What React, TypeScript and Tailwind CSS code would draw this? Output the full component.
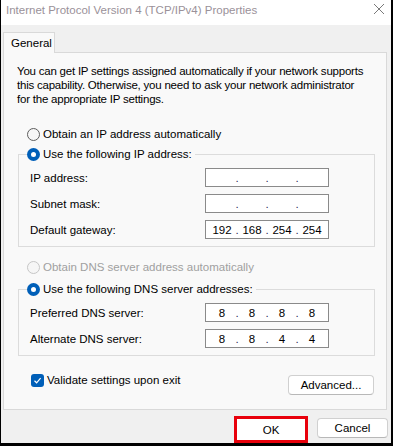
import { Fragment } from 'react'
import cx from 'clsx'

const font = { fontFamily: '"Liberation Sans", Arial, sans-serif' }

const Radio = ({ checked, disabled }: { checked?: boolean; disabled?: boolean }) => {
  if (checked) {
    return (
      <span className="flex size-[13px] flex-none items-center justify-center rounded-full bg-[#005fb8]">
        <span className="size-[5px] rounded-full bg-white" />
      </span>
    )
  }

  return (
    <span
      className={cx(
        'size-[13px] flex-none rounded-full border bg-[#f6f6f6]',
        disabled ? 'border-[#c6c6c6]' : 'border-[#5d5d5d]'
      )}
    />
  )
}

const IpField = ({ parts }: { parts?: string[] }) => (
  <div className="flex h-[19px] w-[124px] flex-none items-center border border-[#8a8a8a] bg-white pl-[1px]">
    {[0, 1, 2, 3].map((i) => (
      <Fragment key={i}>
        <span className="w-[30px] text-center text-black">{parts?.[i] ?? ''}</span>
        {i < 3 && (
          <span className="flex w-0 justify-center text-[#2a1f55]">.</span>
        )}
      </Fragment>
    ))}
  </div>
)

const FieldRow = ({ label, parts }: { label: string; parts?: string[] }) => (
  <div className="flex h-[19px] items-center">
    <span className="w-[186px] pl-[11px] text-black">{label}</span>
    <IpField parts={parts} />
  </div>
)

const GroupBox = ({ title, children }: { title: string; children: React.ReactNode }) => (
  <fieldset className="ml-[1px] w-[357px] border border-[#dcdcdc] pb-[7px]">
    <legend className="ml-[8px] flex h-[16px] items-center gap-[3px] pr-[3px]">
      <Radio checked />
      <span className="text-black">{title}</span>
    </legend>
    <div className="flex flex-col gap-[7px] pt-[6px]">{children}</div>
  </fieldset>
)

const App = () => (
  <div
    className="flex h-[446px] w-[393px] flex-col border-r-2 border-b-[3px] border-l border-black bg-[#f0f0f0] text-[11.5px] leading-[14px] text-black"
    style={font}
  >
    {/* Title bar */}
    <div className="flex h-[25px] flex-none items-start justify-between bg-white pt-[3px] pl-[5px] pr-[6px]">
      <span className="text-[#9a9199]">Internet Protocol Version 4 (TCP/IPv4) Properties</span>
      <svg width="12" height="12" viewBox="0 0 12 12">
        <path d="M1 1 L11 11 M11 1 L1 11" stroke="#7a7a7a" strokeWidth="1" fill="none" />
      </svg>
    </div>

    {/* Tab strip */}
    <div className="ml-[2px] mt-[7px] flex">
      <div className="relative z-10 -mb-px flex h-[21px] w-[52px] items-center border border-b-0 border-[#d9d9d9] bg-[#f9f9f9] pl-[7px]">
        General
      </div>
    </div>

    {/* Tab panel */}
    <div className="ml-[2px] mr-[4px] flex h-[358px] flex-none flex-col border border-[#d9d9d9] bg-[#f9f9f9] pl-[13px] pt-[11px]">
      <p className="whitespace-nowrap tracking-[-0.22px]">
        You can get IP settings assigned automatically if your network supports
        <br />
        this capability. Otherwise, you need to ask your network administrator
        <br />
        for the appropriate IP settings.
      </p>

      <div className="ml-[10px] mt-[20px] flex h-[16px] items-center gap-[3px]">
        <Radio />
        <span>Obtain an IP address automatically</span>
      </div>

      <div className="mt-[4px]">
        <GroupBox title="Use the following IP address:">
          <FieldRow label="IP address:" />
          <FieldRow label="Subnet mask:" />
          <FieldRow label="Default gateway:" parts={['192', '168', '254', '254']} />
        </GroupBox>
      </div>

      <div className="ml-[10px] mt-[12px] flex h-[16px] items-center gap-[3px]">
        <Radio disabled />
        <span className="text-[#a0a0a0]">Obtain DNS server address automatically</span>
      </div>

      <div className="mt-[6px]">
        <GroupBox title="Use the following DNS server addresses:">
          <FieldRow label="Preferred DNS server:" parts={['8', '8', '8', '8']} />
          <FieldRow label="Alternate DNS server:" parts={['8', '8', '4', '4']} />
        </GroupBox>
      </div>

      <div className="flex w-[357px] items-start justify-between">
        <div className="ml-[14px] mt-[16px] flex h-[16px] items-center gap-[3px]">
          <span className="flex size-[13px] items-center justify-center rounded-[3px] bg-[#005fb8]">
            <svg width="9" height="9" viewBox="0 0 9 9">
              <path d="M1.5 4.8 L3.6 6.8 L7.6 2.2" stroke="white" strokeWidth="1.2" fill="none" />
            </svg>
          </span>
          <span>Validate settings upon exit</span>
        </div>
        <button className="mt-[19px] h-[20px] w-[86px] rounded-[4px] border border-[#d0d0d0] border-b-[#b8b8b8] bg-white">
          Advanced...
        </button>
      </div>
    </div>

    {/* Dialog buttons */}
    <div className="mr-[3px] flex h-[33px] items-end justify-end gap-[9px]">
      <div className="flex h-[27px] w-[74px] items-center justify-center border-[3px] border-[#e8000b] bg-white">
        OK
      </div>
      <button className="mb-[5px] h-[20px] w-[71px] rounded-[4px] border border-[#d0d0d0] border-b-[#b8b8b8] bg-white">
        Cancel
      </button>
    </div>
  </div>
)

export default App
